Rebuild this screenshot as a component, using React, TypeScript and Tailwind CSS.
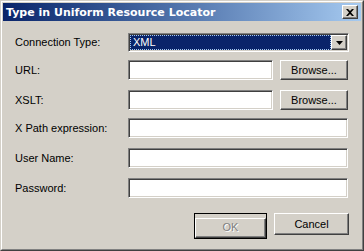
const sunken =
  "bg-white border border-t-[#808080] border-l-[#808080] border-r-white border-b-white shadow-[inset_1px_1px_0_#404040,inset_-1px_-1px_0_#d4d0c8]";
const raised =
  "bg-[#d4d0c8] border border-t-white border-l-white border-r-[#404040] border-b-[#404040] shadow-[inset_-1px_-1px_0_#808080,inset_1px_1px_0_#d4d0c8]";

function Label({ children }: { children: React.ReactNode }) {
  return <div className="w-[113px] shrink-0 text-[11px] text-black leading-none">{children}</div>;
}

function Row({ label, mt, browse }: { label: string; mt: string; browse?: boolean }) {
  return (
    <div className={`flex items-center h-[20px] ${mt}`}>
      <Label>{label}</Label>
      {browse ? (
        <>
          <div className={`${sunken} w-[145px] h-full`} />
          <button className={`${raised} ml-[7px] w-[68px] h-full text-[11px] text-black leading-none`}>
            Browse...
          </button>
        </>
      ) : (
        <div className={`${sunken} w-[220px] h-full`} />
      )}
    </div>
  );
}

export default function App() {
  return (
    <div className="w-[364px] h-[251px] bg-[#d4d0c8] border border-t-[#d4d0c8] border-l-[#d4d0c8] border-r-[#404040] border-b-[#404040] font-['Tahoma','Liberation_Sans',sans-serif]">
      <div className="h-full border border-t-white border-l-white border-r-[#808080] border-b-[#808080] p-px flex flex-col">
        {/* Title bar */}
        <div className="h-[18px] flex items-center justify-between pl-[3px] pr-[3px] bg-gradient-to-r from-[#0a246a] to-[#a6caf0]">
          <span className="text-white font-bold text-[11px] leading-none font-['DejaVu_Sans',sans-serif]">
            Type in Uniform Resource Locator
          </span>
          <div className={`${raised} w-[16px] h-[14px] flex items-center justify-center`}>
            <svg width="8" height="7" viewBox="0 0 8 7">
              <path d="M0 0h2l2 2 2-2h2L5 3.5 8 7H6L4 5 2 7H0l3-3.5z" fill="#000" />
            </svg>
          </div>
        </div>

        {/* Form */}
        <div className="flex flex-col pl-[12px] pr-[12px]">
          <div className="flex items-center h-[19px] mt-[12px]">
            <Label>Connection Type:</Label>
            <div className={`${sunken} w-[221px] h-full flex items-stretch p-px`}>
              <div className="flex-1 bg-[#0a246a] text-white text-[11px] leading-none flex items-center pl-[2px] border border-dotted border-[#a6caf0]">
                XML
              </div>
              <div className={`${raised} w-[16px] flex items-center justify-center`}>
                <svg width="7" height="4" viewBox="0 0 7 4">
                  <path d="M0 0h7L3.5 4z" fill="#000" />
                </svg>
              </div>
            </div>
          </div>
          <Row label="URL:" mt="mt-[8px]" browse />
          <Row label="XSLT:" mt="mt-[10px]" browse />
          <Row label="X Path expression:" mt="mt-[8px]" />
          <Row label="User Name:" mt="mt-[10px]" />
          <Row label="Password:" mt="mt-[10px]" />

          <div className="flex justify-end gap-[7px] mt-[15px]">
            <div className="border border-black">
              <button className={`${raised} w-[71px] h-[20px] text-[11px] text-[#808080] leading-none [text-shadow:1px_1px_0_#fff]`}>
                OK
              </button>
            </div>
            <button className={`${raised} w-[75px] h-[22px] text-[11px] text-black leading-none`}>
              Cancel
            </button>
          </div>
        </div>
      </div>
    </div>
  );
}
